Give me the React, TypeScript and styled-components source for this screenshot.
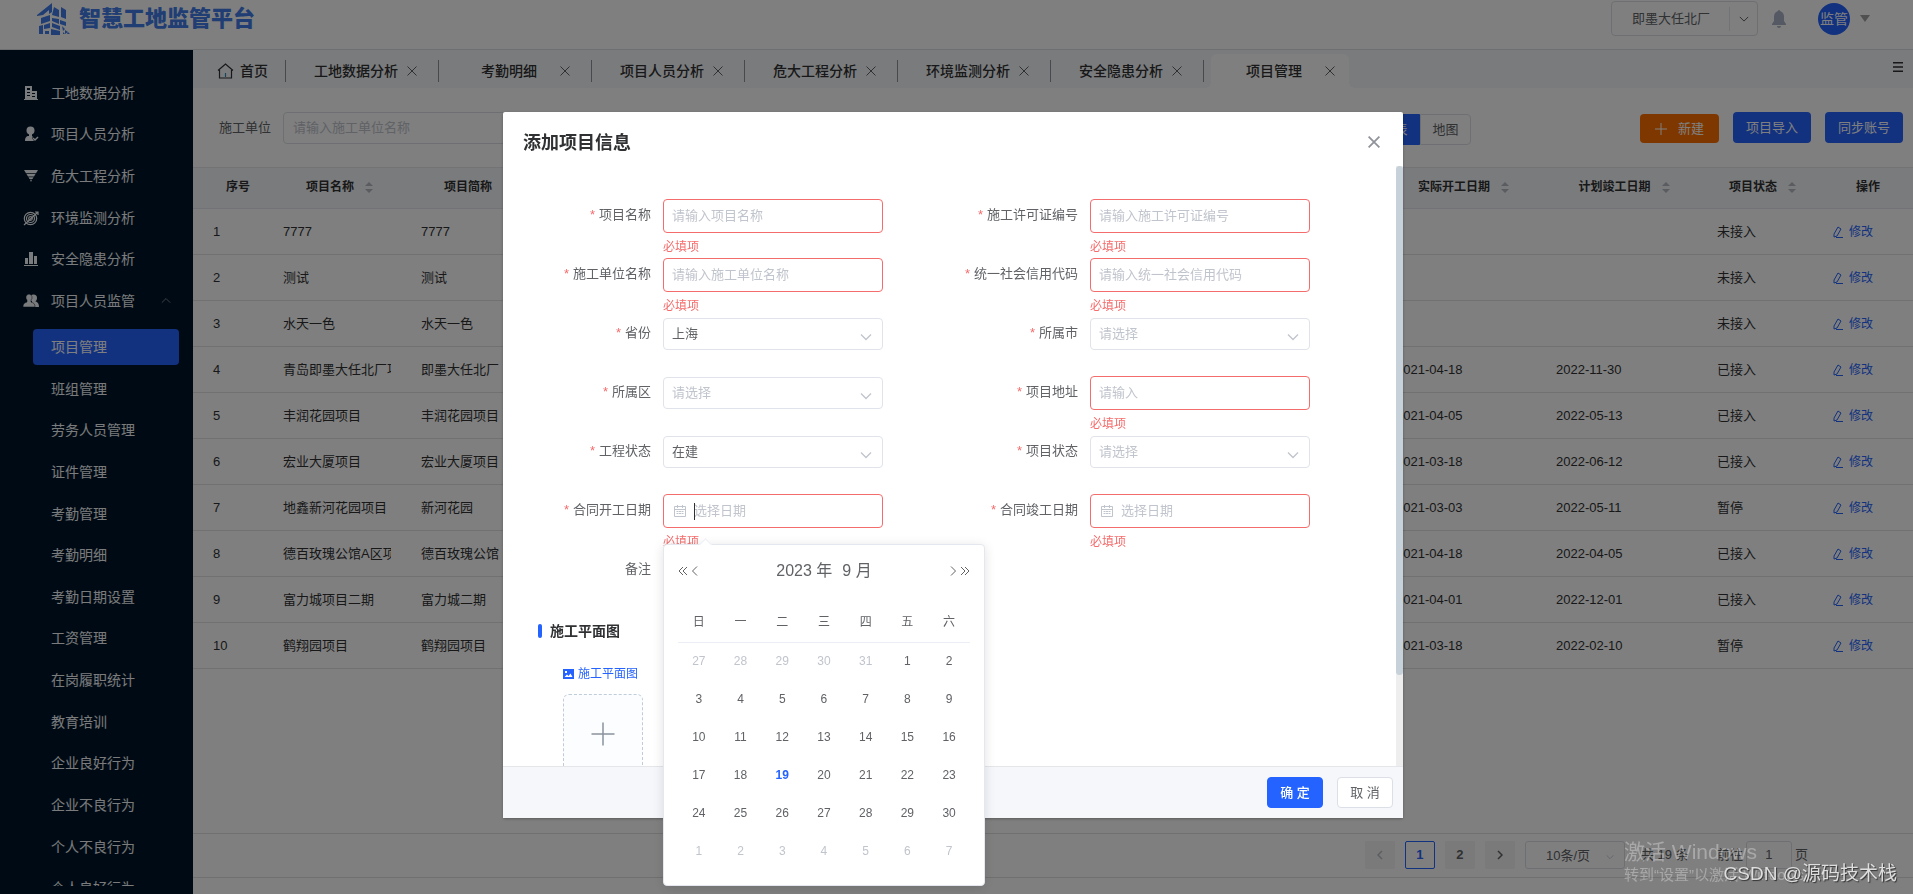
import React from "react";
import styled, { createGlobalStyle, css } from "styled-components";

const primary = "#2463ff";
const danger = "#f56c6c";

const GlobalStyle = createGlobalStyle`
  *, *::before, *::after { box-sizing: border-box; }
  body {
    margin: 0;
    background: #fff;
    color: #303133;
    font: 13px/20px "Liberation Sans", "Noto Sans CJK SC", sans-serif;
  }
  button, input, select, textarea { font: inherit; color: inherit; margin: 0; outline: none; }
  button { cursor: pointer; padding: 0; border: 0; background: none; }
  a { text-decoration: none; }
  ul { list-style: none; margin: 0; padding: 0; }
  svg { display: block; flex: none; }
`;

/* ---------- page frame ---------- */
const Page = styled.div`
  height: 100vh;
  display: flex;
  flex-direction: column;
  overflow: hidden;
`;

const Header = styled.header`
  height: 50px;
  flex: none;
  display: flex;
  align-items: flex-start;
  justify-content: space-between;
  padding: 1px 43px 0 37px;
  border-bottom: 1px solid #dcdee2;
`;

const Brand = styled.div`
  display: flex;
  align-items: center;
  gap: 7px;
  height: 36px;
  color: #407be8;
  font-size: 22px;
  font-weight: 900;
  line-height: 30px;
`;

const HeaderTools = styled.div`
  display: flex;
  align-items: center;
  height: 35px;
`;

const SiteButton = styled.button`
  display: flex;
  align-items: center;
  width: 147px;
  height: 35px;
  margin-right: 13px;
  padding-left: 20px;
  border: 1px solid #dcdfe6;
  border-radius: 4px;
  color: #606266;
`;

const SiteArrow = styled.span`
  display: flex;
  align-items: center;
  justify-content: center;
  width: 28px;
  height: 24px;
  margin-left: auto;
  border-left: 1px solid #e4e7ed;
`;

const IconButton = styled.button`
  display: flex;
  align-items: center;
  justify-content: center;
`;

const Avatar = styled.span`
  display: flex;
  align-items: center;
  justify-content: center;
  width: 32px;
  height: 32px;
  margin: 0 10px 0 31px;
  border-radius: 50%;
  background: ${primary};
  color: #fff;
  font-size: 14px;
`;

const Workspace = styled.div`
  flex: 1;
  min-height: 0;
  display: flex;
`;

/* ---------- sidebar ---------- */
const Sidebar = styled.nav`
  width: 193px;
  flex: none;
  padding: 22px 0 8px;
  background: #001529;
  color: #f4f6f8;
  font-size: 14px;
`;

const MenuScroll = styled.div`
  height: 100%;
  overflow: hidden;
`;

const MenuList = styled.ul<{ $height: number }>`
  display: grid;
  grid-auto-rows: 1fr;
  height: ${(p) => p.$height}px;
`;

const MenuLink = styled.a<{ $nested?: boolean }>`
  display: flex;
  align-items: center;
  height: 100%;
  padding: 0 22px 0 ${(p) => (p.$nested ? 51 : 23)}px;
  gap: 12px;
  color: inherit;
`;

const MenuArrow = styled.svg`
  margin-left: auto;
`;

const ActiveLink = styled.a`
  display: flex;
  align-items: center;
  height: 36px;
  margin: 7px 14px 3px 33px;
  padding-left: 18px;
  border-radius: 4px;
  background: ${primary};
  color: #fff;
`;

/* ---------- tabs ---------- */
const Main = styled.main`
  flex: 1;
  min-width: 0;
  display: flex;
  flex-direction: column;
`;

const TabBar = styled.div`
  display: flex;
  height: 38px;
  flex: none;
  padding: 4px 10px 0 0;
  background: #f5f7fa;
  font-size: 14px;
  font-weight: 500;
`;

const divider = css`
  &::after {
    content: "";
    width: 1px;
    height: 22px;
    margin-left: auto;
    background: #8e9299;
  }
`;

const HomeTab = styled.a`
  display: flex;
  align-items: center;
  width: 93px;
  padding-left: 24px;
  gap: 6px;
  color: #303133;
  ${divider}
`;

const Tab = styled.div<{ $active?: boolean }>`
  display: flex;
  align-items: center;
  position: relative;
  ${(p) =>
    p.$active
      ? css`
          width: 138px;
          margin-left: 7px;
          padding-left: 21px;
          border-radius: 6px 6px 0 0;
          background: #fff;
          &::before,
          &::after {
            content: "";
            position: absolute;
            bottom: 0;
            width: 6px;
            height: 6px;
          }
          &::before {
            left: -6px;
            background: radial-gradient(circle at 0 0, #f5f7fa 6px, #fff 6px);
          }
          &::after {
            right: -6px;
            background: radial-gradient(circle at 100% 0, #f5f7fa 6px, #fff 6px);
          }
        `
      : css`
          width: 153px;
          padding-left: 28px;
          ${divider}
        `}
`;

const TabName = styled.span`
  width: 84px;
  margin-right: 9px;
  text-align: center;
  white-space: nowrap;
`;

const TabsMenu = styled(IconButton)`
  margin-left: auto;
  height: 26px;
`;

/* ---------- toolbar ---------- */
const Toolbar = styled.div`
  display: flex;
  align-items: flex-start;
  height: 79px;
  flex: none;
  padding: 24px 10px 0 26px;
`;

const SearchLabel = styled.label`
  line-height: 32px;
  margin-right: 12px;
  color: #606266;
`;

const SearchInput = styled.input`
  width: 240px;
  height: 32px;
  padding: 0 9px 2px;
  border: 1px solid #dcdfe6;
  border-radius: 4px;
  &::placeholder { color: #c0c4cc; opacity: 1; }
`;

const ToggleGroup = styled.div`
  display: flex;
  margin: 2px 169px 0 auto;
`;

const Toggle = styled.button<{ $on?: boolean }>`
  width: 51px;
  height: 31px;
  border: 1px solid ${(p) => (p.$on ? primary : "#dcdfe6")};
  border-radius: ${(p) => (p.$on ? "4px 0 0 4px" : "0 4px 4px 0")};
  background: ${(p) => (p.$on ? primary : "#fff")};
  color: ${(p) => (p.$on ? "#fff" : "#606266")};
`;

const Actions = styled.div`
  display: flex;
  align-items: flex-end;
  height: 31px;
  gap: 14px;
`;

const ActionButton = styled.button<{ $accent?: boolean }>`
  display: flex;
  align-items: center;
  justify-content: center;
  gap: 11px;
  width: ${(p) => (p.$accent ? 79 : 78)}px;
  height: ${(p) => (p.$accent ? 29 : 31)}px;
  border-radius: 4px;
  background: ${(p) => (p.$accent ? "#ff6f00" : primary)};
  color: #fff;
`;

/* ---------- table ---------- */
const DataTable = styled.table`
  width: 100%;
  table-layout: fixed;
  border-collapse: collapse;
  th {
    height: 41px;
    padding: 0 0 2px;
    border-top: 1px solid #e6e6ea;
    border-bottom: 1px solid #e3e6ee;
    background: #f5f7fa;
    font-size: 12px;
    font-weight: 700;
  }
  th:first-child { padding-left: 10px; }
  td {
    height: 46px;
    padding: 0 20px 0 10px;
    border-bottom: 1px solid #e2e2e2;
    white-space: nowrap;
    overflow: hidden;
  }
  td:first-child { padding-left: 20px; }
`;

const HeadCell = styled.span`
  display: inline-flex;
  align-items: center;
  gap: 11px;
  padding-right: 5px;
`;

const ClipText = styled.div`
  overflow: hidden;
`;

const EditLink = styled.a`
  display: flex;
  align-items: center;
  gap: 6px;
  color: ${primary};
  font-size: 12px;
`;

/* ---------- pagination ---------- */
const Pagination = styled.div`
  display: flex;
  align-items: flex-start;
  justify-content: flex-end;
  height: 45px;
  flex: none;
  margin: auto 0 16px;
  padding: 7px 105px 0 0;
  border-top: 1px solid #e0e0e0;
  border-bottom: 1px solid #e0e0e0;
  line-height: 28px;
  color: #606266;
`;

const PageButton = styled.button<{ $current?: boolean }>`
  display: flex;
  align-items: center;
  justify-content: center;
  width: 30px;
  height: 28px;
  margin-right: 10px;
  border: ${(p) => (p.$current ? `1px solid ${primary}` : 0)};
  border-radius: 2px;
  background: ${(p) => (p.$current ? "#fff" : "#f4f4f5")};
  color: ${(p) => (p.$current ? primary : "#606266")};
  font-weight: 700;
`;

const SizeSelect = styled.select`
  appearance: none;
  width: 100px;
  height: 28px;
  padding-left: 20px;
  border: 1px solid #dcdfe6;
  border-radius: 3px;
  background: #fff;
`;

const SelectWrap = styled.span`
  position: relative;
  display: block;
  svg {
    position: absolute;
    right: 11px;
    top: 50%;
    margin-top: -3px;
    pointer-events: none;
  }
`;

const Total = styled.span`
  width: 92px;
  padding-left: 16px;
`;

const JumpLabel = styled.label`
  display: flex;
  align-items: flex-start;
  gap: 3px;
`;

const JumpInput = styled.input`
  width: 46px;
  height: 28px;
  border: 1px solid #dcdfe6;
  border-radius: 3px;
  text-align: center;
`;

/* ---------- dialog ---------- */
const Overlay = styled.div`
  position: fixed;
  inset: 0;
  display: flex;
  align-items: flex-start;
  justify-content: center;
  padding: 112px 7px 0 0;
  background: rgba(0, 0, 0, 0.5);
`;

const Dialog = styled.section`
  position: relative;
  width: 900px;
  border-radius: 2px;
  background: #fff;
  box-shadow: 0 1px 3px rgba(0, 0, 0, 0.3);
`;

const DialogHeader = styled.header`
  display: flex;
  align-items: flex-start;
  justify-content: space-between;
  height: 54px;
  padding: 19px 23px 0 20px;
`;

const DialogTitle = styled.h2`
  margin: 0;
  font-size: 18px;
  line-height: 24px;
  font-weight: 700;
`;

const CloseButton = styled(IconButton)`
  height: 22px;
`;

const DialogBody = styled.div`
  display: flex;
  height: 600px;
  overflow: hidden;
`;

const ScrollContent = styled.div`
  flex: 1;
  height: 100%;
  padding: 33px 19px 0 20px;
`;

const ScrollTrack = styled.div`
  width: 7px;
  background: #eee;
`;

const ScrollThumb = styled.div`
  height: 509px;
  border-radius: 4px;
  background: #c6d1da;
`;

const FormGrid = styled.form`
  display: grid;
  grid-template-columns: 1fr 1fr;
  grid-auto-rows: 59px;
`;

const FormItem = styled.div`
  display: grid;
  grid-template-columns: 140px 220px;
  grid-template-rows: 34px auto;
`;

const FieldLabel = styled.label<{ $required?: boolean }>`
  padding-right: 12px;
  line-height: 32px;
  text-align: right;
  color: #606266;
  ${(p) =>
    p.$required &&
    css`
      &::before {
        content: "*";
        margin-right: 4px;
        color: ${danger};
      }
    `}
`;

const Control = styled.div`
  position: relative;
  align-self: center;
  > svg {
    position: absolute;
    top: 50%;
    left: 11px;
    margin-top: -6px;
    pointer-events: none;
  }
`;

const fieldBox = css`
  display: block;
  width: 100%;
  padding: 0 8px 1px;
  border-radius: 4px;
  background: #fff;
  color: #606266;
`;

const TextField = styled.input<{ $icon?: boolean }>`
  ${fieldBox}
  height: 34px;
  padding-left: ${(p) => (p.$icon ? 30 : 8)}px;
  border: 1px solid ${danger};
  &::placeholder { color: #c0c4cc; opacity: 1; }
`;

const SelectField = styled.select<{ $empty?: boolean }>`
  ${fieldBox}
  appearance: none;
  height: 32px;
  border: 1px solid #e0e3e9;
  color: ${(p) => (p.$empty ? "#c0c4cc" : "#606266")};
`;

const NoteField = styled.textarea`
  ${fieldBox}
  height: 32px;
  resize: none;
  border: 1px solid #dcdfe6;
`;

const Caret = styled.span`
  position: absolute;
  left: 31px;
  top: 9px;
  width: 1px;
  height: 17px;
  background: #303133;
`;

const ErrorText = styled.p`
  grid-column: 2;
  margin: 7px 0 0;
  font-size: 12px;
  line-height: 14px;
  color: ${danger};
`;

const SectionTitle = styled.h3`
  display: flex;
  align-items: center;
  gap: 8px;
  margin: 9px 0 0 15px;
  font-size: 14px;
  line-height: 20px;
  font-weight: 700;
  &::before {
    content: "";
    width: 4px;
    height: 14px;
    border-radius: 2px;
    background: ${primary};
  }
`;

const PlanLink = styled.a`
  display: flex;
  align-items: center;
  gap: 4px;
  margin: 23px 0 10px 40px;
  font-size: 12px;
  color: ${primary};
`;

const UploadBox = styled.button`
  display: flex;
  align-items: center;
  justify-content: center;
  width: 80px;
  height: 80px;
  margin-left: 40px;
  border: 1px dashed #c0ccda;
  border-radius: 6px;
  background: #fbfdff;
`;

const DialogFooter = styled.footer`
  display: flex;
  align-items: center;
  justify-content: flex-end;
  gap: 14px;
  height: 52px;
  padding-right: 10px;
  border-top: 1px solid #e4e6ea;
  background: #f5f7fa;
`;

const FooterButton = styled.button<{ $primary?: boolean }>`
  width: 56px;
  height: 31px;
  border: 1px solid ${(p) => (p.$primary ? primary : "#dcdfe6")};
  border-radius: 4px;
  background: ${(p) => (p.$primary ? primary : "#fff")};
  color: ${(p) => (p.$primary ? "#fff" : "#606266")};
  font-weight: ${(p) => (p.$primary ? 500 : 400)};
`;

/* ---------- date picker ---------- */
const Picker = styled.div`
  position: absolute;
  left: 160px;
  top: 432px;
  width: 322px;
  padding: 12px 14px 15px;
  border: 1px solid #e4e7ed;
  border-radius: 4px;
  background: #fff;
  color: #606266;
  box-shadow: 0 2px 12px rgba(0, 0, 0, 0.12);
  &::before {
    content: "";
    position: absolute;
    left: 37px;
    top: -5px;
    width: 9px;
    height: 9px;
    border: 1px solid #ebeef5;
    border-width: 1px 0 0 1px;
    background: #fff;
    transform: rotate(45deg);
  }
`;

const PickerHeader = styled.div`
  display: flex;
  align-items: center;
  justify-content: space-between;
  height: 28px;
  margin-bottom: 17px;
  font-size: 16px;
`;

const PickerNav = styled.div`
  display: flex;
  gap: 3px;
`;

const PickerTitle = styled.div`
  display: flex;
  gap: 10px;
`;

const Calendar = styled.table`
  width: 292px;
  table-layout: fixed;
  border-collapse: collapse;
  font-size: 12px;
  text-align: center;
  th {
    height: 40px;
    padding: 0;
    border-bottom: 1px solid #ebeef5;
    font-weight: 400;
  }
  td { height: 38px; padding: 0; }
`;

const Day = styled.button<{ $muted?: boolean; $today?: boolean }>`
  width: 24px;
  height: 24px;
  color: ${(p) => (p.$today ? primary : p.$muted ? "#c0c4cc" : "#606266")};
  font-weight: ${(p) => (p.$today ? 700 : 400)};
`;

/* ---------- watermarks ---------- */
const Watermark = styled.div`
  position: fixed;
  left: calc(100vw - 289px);
  bottom: 8px;
  color: rgba(255, 255, 255, 0.32);
  font-size: 15px;
  line-height: 22px;
  white-space: nowrap;
  pointer-events: none;
`;

const WatermarkTitle = styled.div`
  font-size: 21px;
  line-height: 24px;
`;

const Credit = styled.div`
  position: fixed;
  right: 16px;
  bottom: 7px;
  color: #dedede;
  font-size: 19px;
  line-height: 26px;
  text-shadow: 1px 1px 1px #333;
  white-space: nowrap;
  pointer-events: none;
`;

/* ---------- icons ---------- */
const Chevron = ({ color = "#c0c4cc", size = 12, width = 1.3 }) => (
  <svg width={size} height={size} viewBox="0 0 12 12" fill="none" stroke={color} strokeWidth={width}>
    <path d="M1 3.500 6 8.500 11 3.500" />
  </svg>
);

const Cross = ({ size = 10, color = "#606266", width = 1 }) => (
  <svg width={size} height={size} viewBox="0 0 10 10" stroke={color} strokeWidth={width}>
    <path d="M.5.5 9.5 9.5M9.5.5.5 9.5" />
  </svg>
);

const SortIcon = () => (
  <svg width="8" height="12" viewBox="0 0 8 12" fill="#b4b8c0">
    <path d="M4 1 8 5H0ZM4 12 0 8H8Z" />
  </svg>
);

const Arrows = ({ double = false, right = false }) => (
  <svg
    width={double ? 10 : 7}
    height="12"
    viewBox={double ? "0 0 10 12" : "0 0 7 12"}
    fill="none"
    stroke="#606266"
  >
    {double ? (
      <path d={right ? "M1 2 5 6 1 10M5 2 9 6 5 10" : "M5 2 1 6 5 10M9 2 5 6 9 10"} />
    ) : (
      <path d={right ? "M1 1.500 5.500 6 1 10.500" : "M6 1.500 1.500 6 6 10.500"} />
    )}
  </svg>
);

const CalendarIcon = () => (
  <svg width="12" height="12" viewBox="0 0 12 12" fill="none" stroke="#c0c4cc">
    <path d="M.5 1.500h11v10H.5zM.5 4.500h11M3.500 0v3M8.500 0v3" />
    <path d="M2.500 6.500h7M2.500 8.500h7" strokeDasharray="2 .5" />
  </svg>
);

const LogoMark = () => (
  <svg width="35" height="32" viewBox="0 0 35 32" fill="currentColor">
    <path d="M0 12 15 0v9l-3 2v-4L6 12l-6 1ZM17 4l5 3v7l-7-2ZM24 8l0-4 5 3v9l-5-2ZM4 15l9-3v6l-9 3ZM15 15l7 1v5l-7-3ZM23 17l6 2v4l-6-2ZM2 23l4-1v9H2ZM7 22l6-2v5l-6 1ZM15 20l8 3v4l-8-3ZM8 28h4v3H8ZM14 26l9 2v4h-9ZM25 23l3 3-2 2ZM28 27l3 2-3 2ZM31 29l2 2h-3ZM26 29l2 2-2 0Z" />
  </svg>
);

const MenuIcon = ({ name }: { name: string }) => {
  const shapes: Record<string, React.ReactNode> = {
    building: (
      <path
        fillRule="evenodd"
        d="M2 1h7v5h5v8h1v1H1v-1h1ZM4 3v2h3V3ZM4 7v1h3V7ZM4 10v1h3v-1ZM9 8v1h3V8ZM9 11v1h3v-1Z"
      />
    ),
    person: (
      <>
        <circle cx="7.500" cy="4.500" r="4" />
        <path d="M6 8h3v2l1 1-1 1 2 3H2c0-3 1-5 4-5Z" />
        <path d="m10 12 2 2 3-3" fill="none" stroke="currentColor" strokeWidth="1.500" />
      </>
    ),
    funnel: <path d="M1 2h14l-2 3.200H3ZM3.500 6h9l-1.500 2.400H5ZM5.500 9.200h5L9.500 11H6.500ZM7 11.800h2L8 14Z" />,
    target: (
      <g fill="none" stroke="currentColor" strokeWidth="1.200">
        <circle cx="7.500" cy="8.500" r="6.200" />
        <circle cx="7.500" cy="8.500" r="4" />
        <circle cx="7.500" cy="8.500" r="1.800" />
        <path d="M1 15 15 2M12 2h3v3" />
      </g>
    ),
    bars: <path d="M1 14h14v1H1ZM2 7h3v6H2ZM6 1h4v12H6ZM11 5h3v8h-3Z" />,
    people: (
      <>
        <circle cx="10.500" cy="5" r="3.500" />
        <path d="M9 8h3c3 1 4 3 4 6H9Z" />
        <path
          d="M6 1a3.500 3.500 0 0 1 2 6v2c3 1 4 2 4 5H0c0-3 1-4 4-5V7a3.500 3.500 0 0 1 2-6Z"
          stroke="#001529"
          strokeWidth=".5"
        />
      </>
    ),
  };
  return (
    <svg width="16" height="16" viewBox="0 0 16 16" fill="currentColor">
      {shapes[name]}
    </svg>
  );
};

/* ---------- data ---------- */
const topMenu = [
  ["building", "工地数据分析"],
  ["person", "项目人员分析"],
  ["funnel", "危大工程分析"],
  ["target", "环境监测分析"],
  ["bars", "安全隐患分析"],
  ["people", "项目人员监管"],
];

const subMenu = [
  "班组管理", "劳务人员管理", "证件管理", "考勤管理", "考勤明细", "考勤日期设置", "工资管理",
  "在岗履职统计", "教育培训", "企业良好行为", "企业不良行为", "个人不良行为", "个人良好行为",
];

const tabs = ["工地数据分析", "考勤明细", "项目人员分析", "危大工程分析", "环境监测分析", "安全隐患分析", "项目管理"];

const rows = [
  ["7777", "7777", "", "", "未接入"],
  ["测试", "测试", "", "", "未接入"],
  ["水天一色", "水天一色", "", "", "未接入"],
  ["青岛即墨大任北厂项目", "即墨大任北厂", "2021-04-18", "2022-11-30", "已接入"],
  ["丰润花园项目", "丰润花园项目", "2021-04-05", "2022-05-13", "已接入"],
  ["宏业大厦项目", "宏业大厦项目", "2021-03-18", "2022-06-12", "已接入"],
  ["地鑫新河花园项目", "新河花园", "2021-03-03", "2022-05-11", "暂停"],
  ["德百玫瑰公馆A区项目", "德百玫瑰公馆", "2021-04-18", "2022-04-05", "已接入"],
  ["富力城项目二期", "富力城二期", "2021-04-01", "2022-12-01", "已接入"],
  ["鹤翔园项目", "鹤翔园项目", "2021-03-18", "2022-02-10", "暂停"],
];

type Field = {
  id: string;
  label: string;
  kind: "text" | "select" | "date" | "note";
  hint?: string;
  value?: string;
  focused?: boolean;
};

const fields: Field[] = [
  { id: "name", label: "项目名称", kind: "text", hint: "请输入项目名称" },
  { id: "permit", label: "施工许可证编号", kind: "text", hint: "请输入施工许可证编号" },
  { id: "unit", label: "施工单位名称", kind: "text", hint: "请输入施工单位名称" },
  { id: "credit", label: "统一社会信用代码", kind: "text", hint: "请输入统一社会信用代码" },
  { id: "province", label: "省份", kind: "select", value: "上海" },
  { id: "city", label: "所属市", kind: "select" },
  { id: "district", label: "所属区", kind: "select" },
  { id: "address", label: "项目地址", kind: "text", hint: "请输入" },
  { id: "progress", label: "工程状态", kind: "select", value: "在建" },
  { id: "status", label: "项目状态", kind: "select" },
  { id: "start", label: "合同开工日期", kind: "date", hint: "选择日期", focused: true },
  { id: "end", label: "合同竣工日期", kind: "date", hint: "选择日期" },
  { id: "note", label: "备注", kind: "note" },
];

/* September 2023 starts on a Friday, so the grid opens with five days of August. */
const weeks = Array.from({ length: 6 }, (_, w) =>
  Array.from({ length: 7 }, (_, d) => {
    const n = w * 7 + d - 4;
    if (n < 1) return { day: n + 31, muted: true };
    if (n > 30) return { day: n - 30, muted: true };
    return { day: n, muted: false };
  })
);

const SortableHead = ({ children }: { children: React.ReactNode }) => (
  <th scope="col">
    <HeadCell>
      {children}
      <SortIcon />
    </HeadCell>
  </th>
);

const FormField = ({ field }: { field: Field }) => {
  const { id, label, kind, hint, value, focused } = field;
  const invalid = kind === "text" || kind === "date";
  return (
    <FormItem>
      <FieldLabel htmlFor={id} $required={kind !== "note"}>
        {label}
      </FieldLabel>
      <Control>
        {invalid && <TextField id={id} placeholder={hint} $icon={kind === "date"} />}
        {kind === "date" && <CalendarIcon />}
        {focused && <Caret />}
        {kind === "select" && (
          <SelectWrap>
            <SelectField id={id} $empty={!value}>
              <option>{value || "请选择"}</option>
            </SelectField>
            <Chevron />
          </SelectWrap>
        )}
        {kind === "note" && <NoteField id={id} />}
      </Control>
      {invalid && <ErrorText>必填项</ErrorText>}
    </FormItem>
  );
};

const DatePicker = () => (
  <Picker>
    <PickerHeader>
      <PickerNav>
        <IconButton aria-label="上一年"><Arrows double /></IconButton>
        <IconButton aria-label="上个月"><Arrows /></IconButton>
      </PickerNav>
      <PickerTitle>
        <span>2023 年</span>
        <span>9 月</span>
      </PickerTitle>
      <PickerNav>
        <IconButton aria-label="下个月"><Arrows right /></IconButton>
        <IconButton aria-label="下一年"><Arrows double right /></IconButton>
      </PickerNav>
    </PickerHeader>
    <Calendar>
      <thead>
        <tr>
          {["日", "一", "二", "三", "四", "五", "六"].map((d) => (
            <th key={d} scope="col">{d}</th>
          ))}
        </tr>
      </thead>
      <tbody>
        {weeks.map((week, i) => (
          <tr key={i}>
            {week.map(({ day, muted }) => (
              <td key={day}>
                <Day $muted={muted} $today={!muted && day === 19}>{day}</Day>
              </td>
            ))}
          </tr>
        ))}
      </tbody>
    </Calendar>
  </Picker>
);

export default function App() {
  return (
    <>
      <GlobalStyle />
      <Page>
        <Header>
          <Brand>
            <LogoMark />
            智慧工地监管平台
          </Brand>
          <HeaderTools>
            <SiteButton>
              即墨大任北厂
              <SiteArrow><Chevron color="#606266" size={10} width={1.2} /></SiteArrow>
            </SiteButton>
            <IconButton aria-label="通知">
              <svg width="16" height="18" viewBox="0 0 16 18" fill="#aab2c6">
                <path d="M8 0c1 0 1 1 1 1 3 1 4 3 4 6v4l2 3v1H1v-1l2-3V7c0-3 1-5 4-6 0 0 0-1 1-1ZM6 16h4a2 2 0 0 1-4 0Z" />
              </svg>
            </IconButton>
            <Avatar>监管</Avatar>
            <svg width="10" height="7" viewBox="0 0 10 7" fill="#a0a0a0">
              <path d="M0 0h10L5 7Z" />
            </svg>
          </HeaderTools>
        </Header>

        <Workspace>
          <Sidebar>
            <MenuScroll>
              <MenuList $height={250}>
                {topMenu.map(([icon, name]) => (
                  <li key={name}>
                    <MenuLink href="#">
                      <MenuIcon name={icon} />
                      {name}
                      {icon === "people" && (
                        <MenuArrow width="10" height="10" viewBox="0 0 12 12" fill="none" stroke="#909399">
                          <path d="M1 8 6 3 11 8" />
                        </MenuArrow>
                      )}
                    </MenuLink>
                  </li>
                ))}
              </MenuList>
              <ActiveLink href="#">项目管理</ActiveLink>
              <MenuList $height={541}>
                {subMenu.map((name) => (
                  <li key={name}>
                    <MenuLink href="#" $nested>{name}</MenuLink>
                  </li>
                ))}
              </MenuList>
            </MenuScroll>
          </Sidebar>

          <Main>
            <TabBar>
              <HomeTab href="#">
                <svg width="17" height="16" viewBox="0 0 17 16" fill="none" stroke="#303133" strokeWidth="1.200">
                  <path d="M1 7.500 8.500 1 16 7.500M2.500 7v8h12V7" />
                  <path d="M8.500 10v4" stroke="#2a8fb8" />
                </svg>
                首页
              </HomeTab>
              {tabs.map((name) => (
                <Tab key={name} $active={name === "项目管理"}>
                  <TabName>{name}</TabName>
                  <IconButton aria-label={`关闭${name}`}><Cross /></IconButton>
                </Tab>
              ))}
              <TabsMenu aria-label="标签页菜单">
                <svg width="10" height="10" viewBox="0 0 10 10" fill="#303133">
                  <path d="M0 0h10v1.500H0ZM0 4.250h10v1.500H0ZM0 8.500h10v1.500H0Z" />
                </svg>
              </TabsMenu>
            </TabBar>

            <Toolbar>
              <SearchLabel htmlFor="search-unit">施工单位</SearchLabel>
              <SearchInput id="search-unit" placeholder="请输入施工单位名称" />
              <ToggleGroup>
                <Toggle $on>列表</Toggle>
                <Toggle>地图</Toggle>
              </ToggleGroup>
              <Actions>
                <ActionButton $accent>
                  <svg width="12" height="12" viewBox="0 0 12 12" stroke="#fff">
                    <path d="M6 0v12M0 6h12" />
                  </svg>
                  新建
                </ActionButton>
                <ActionButton>项目导入</ActionButton>
                <ActionButton>同步账号</ActionButton>
              </Actions>
            </Toolbar>

            <DataTable>
              <colgroup>
                <col width="80" />
                <col width="138" />
                <col width="138" />
                <col />
                <col width="160" />
                <col width="161" />
                <col width="116" />
                <col width="90" />
              </colgroup>
              <thead>
                <tr>
                  <th scope="col">序号</th>
                  <SortableHead>项目名称</SortableHead>
                  <SortableHead>项目简称</SortableHead>
                  <th />
                  <SortableHead>实际开工日期</SortableHead>
                  <SortableHead>计划竣工日期</SortableHead>
                  <SortableHead>项目状态</SortableHead>
                  <th scope="col">操作</th>
                </tr>
              </thead>
              <tbody>
                {rows.map(([name, short, start, end, status], i) => (
                  <tr key={name}>
                    <td>{i + 1}</td>
                    <td><ClipText>{name}</ClipText></td>
                    <td><ClipText>{short}</ClipText></td>
                    <td />
                    <td>{start}</td>
                    <td>{end}</td>
                    <td>{status}</td>
                    <td>
                      <EditLink href="#">
                        <svg width="10" height="12" viewBox="0 0 10 12" fill="none" stroke="currentColor">
                          <path d="M5 1 8 3 4 10 1 11V8ZM3 11.500H10" />
                        </svg>
                        修改
                      </EditLink>
                    </td>
                  </tr>
                ))}
              </tbody>
            </DataTable>

            <Pagination>
              <PageButton aria-label="上一页">
                <svg width="6" height="10" viewBox="0 0 6 10" fill="none" stroke="#b8bcc4" strokeWidth="1.500">
                  <path d="M5 1 1 5 5 9" />
                </svg>
              </PageButton>
              <PageButton $current>1</PageButton>
              <PageButton>2</PageButton>
              <PageButton aria-label="下一页">
                <svg width="6" height="10" viewBox="0 0 6 10" fill="none" stroke="#606266" strokeWidth="1.500">
                  <path d="M1 1 5 5 1 9" />
                </svg>
              </PageButton>
              <SelectWrap>
                <SizeSelect aria-label="每页条数">
                  <option>10条/页</option>
                </SizeSelect>
                <Chevron size={8} />
              </SelectWrap>
              <Total>共 19 条</Total>
              <JumpLabel>
                前往
                <JumpInput defaultValue="1" />
                页
              </JumpLabel>
            </Pagination>
          </Main>
        </Workspace>
      </Page>

      <Overlay>
        <Dialog role="dialog" aria-labelledby="dialog-title">
          <DialogHeader>
            <DialogTitle id="dialog-title">添加项目信息</DialogTitle>
            <CloseButton aria-label="关闭"><Cross size={12} color="#909399" width={1.5} /></CloseButton>
          </DialogHeader>
          <DialogBody>
            <ScrollContent>
              <FormGrid>
                {fields.map((f) => (
                  <FormField key={f.id} field={f} />
                ))}
              </FormGrid>
              <SectionTitle>施工平面图</SectionTitle>
              <PlanLink href="#">
                <svg width="11" height="10" viewBox="0 0 11 10">
                  <path d="M0 0h11v10H0Z" fill="currentColor" />
                  <path d="M2 2h2v2H2ZM1.500 8 4 5.500 5.500 7 7.500 4.500 9.500 8Z" fill="#fff" />
                </svg>
                施工平面图
              </PlanLink>
              <UploadBox aria-label="上传施工平面图">
                <svg width="24" height="24" viewBox="0 0 24 24" stroke="#8c939d" strokeWidth="1.500">
                  <path d="M12 .5v23M.5 12h23" />
                </svg>
              </UploadBox>
            </ScrollContent>
            <ScrollTrack>
              <ScrollThumb />
            </ScrollTrack>
          </DialogBody>
          <DialogFooter>
            <FooterButton $primary>确 定</FooterButton>
            <FooterButton>取 消</FooterButton>
          </DialogFooter>
          <DatePicker />
        </Dialog>
      </Overlay>

      <Watermark>
        <WatermarkTitle>激活 Windows</WatermarkTitle>
        转到“设置”以激活 Windows。
      </Watermark>
      <Credit>CSDN @源码技术栈</Credit>
    </>
  );
}
